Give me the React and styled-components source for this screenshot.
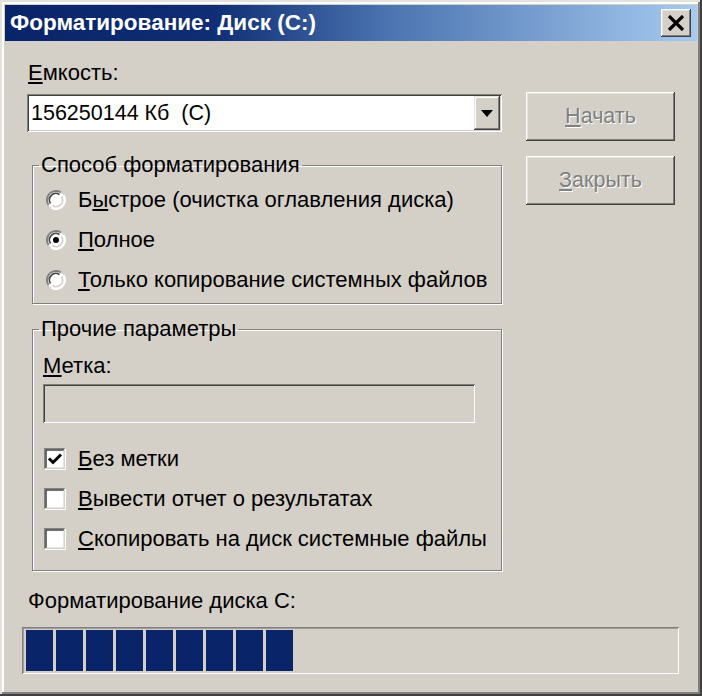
import React from "react";
import styled, { createGlobalStyle } from "styled-components";

const Global = createGlobalStyle`
  html, body { margin: 0; padding: 0; background: #d4d0c8; }
  body { font-family: "Liberation Sans", Arial, sans-serif; }
  * { box-sizing: border-box; }
`;

const Window = styled.div`
  width: 702px;
  height: 696px;
  background: #d4d0c8;
  padding: 5px;
  display: flex;
  flex-direction: column;
  box-shadow: inset -2px -2px #404040, inset 2px 2px #e4e2dc,
    inset -4px -4px #808080, inset 4px 4px #ffffff;
  font-size: 22px;
  color: #000;
`;

const TitleBar = styled.div`
  height: 36px;
  flex: none;
  display: flex;
  align-items: center;
  justify-content: space-between;
  padding: 0 6px 0 5px;
  background: linear-gradient(90deg, #0a246a 0%, #0f2d75 30%, #4a73b0 55%, #a6caf0 100%);
`;

const Title = styled.span`
  color: #fff;
  font-weight: bold;
  font-size: 22.5px;
`;

const CloseButton = styled.div`
  width: 30px;
  height: 28px;
  background: #d4d0c8;
  display: flex;
  align-items: center;
  justify-content: center;
  box-shadow: inset -1px -1px #404040, inset 1px 1px #fff,
    inset -2px -2px #808080, inset 2px 2px #e4e2dc;
`;

const Body = styled.div`
  padding: 20px 22px 0 22px;
  display: grid;
  grid-template-columns: 475px 149px;
  column-gap: 24px;
`;

const LeftCol = styled.div`
  display: flex;
  flex-direction: column;
`;

const RightCol = styled.div`
  display: flex;
  flex-direction: column;
  gap: 15px;
  padding-top: 31px;
`;

const Label = styled.div`
  height: 24px;
  line-height: 24px;
  padding-left: ${(p) => p.$indent || 0}px;
  margin-top: ${(p) => p.$mt || 0}px;
`;

const Key = styled.span`
  text-decoration: underline;
  text-underline-offset: 2px;
`;

const Sunken = styled.div`
  background: ${(p) => p.$bg || "#fff"};
  box-shadow: inset 1px 1px #808080, inset -1px -1px #fff,
    inset 2px 2px #404040, inset -2px -2px #d4d0c8;
`;

const Combo = styled(Sunken)`
  margin-top: 9px;
  height: 38px;
  display: flex;
  align-items: center;
  padding: 2px 2px 2px 4px;
`;

const ComboText = styled.span`
  flex: 1;
  white-space: pre;
  font-size: 21.5px;
`;

const DropButton = styled.div`
  width: 26px;
  height: 34px;
  background: #d4d0c8;
  display: flex;
  align-items: center;
  justify-content: center;
  box-shadow: inset -1px -1px #404040, inset 1px 1px #e4e2dc,
    inset -2px -2px #808080, inset 2px 2px #fff;
`;

const Group = styled.fieldset`
  margin: ${(p) => p.$mt}px 0 0 5px;
  padding: 0;
  width: 470px;
  min-width: 0;
  border: 1px solid #808080;
  box-shadow: inset 1px 1px #fff, 1px 1px #fff;
`;

const Legend = styled.legend`
  margin-left: 6px;
  padding: 0 2px;
  line-height: 24px;
  height: 24px;
`;

const GroupContent = styled.div`
  display: flex;
  flex-direction: column;
  padding: ${(p) => p.$pad};
`;

const OptionRow = styled.div`
  height: 40px;
  display: flex;
  align-items: center;
  gap: 12px;
  white-space: nowrap;
`;

const Field = styled(Sunken)`
  margin-top: 6px;
  height: 39px;
  width: 432px;
`;

const Checks = styled.div`
  margin-top: 16px;
  display: flex;
  flex-direction: column;
  margin-left: 1px;
`;

const Button = styled.div`
  height: 49px;
  background: #d4d0c8;
  display: flex;
  align-items: center;
  justify-content: center;
  color: #808080;
  text-shadow: 1px 1px #fff;
  font-size: 21.5px;
  box-shadow: inset -1px -1px #404040, inset 1px 1px #fff,
    inset -2px -2px #808080, inset 2px 2px #e4e2dc;
`;

const Bottom = styled.div`
  display: flex;
  flex-direction: column;
  padding-left: 17px;
`;

const Progress = styled.div`
  margin-top: 14px;
  width: 657px;
  height: 47px;
  padding: 3px 3px 3px 4px;
  display: flex;
  gap: 3px;
  background: #d4d0c8;
  box-shadow: inset 1px 1px #808080, inset -1px -1px #fff,
    inset 2px 2px #a09c94;
`;

const Block = styled.div`
  width: 27px;
  height: 100%;
  background: #0a246a;
`;

const Radio = ({ checked }) => (
  <svg width="20" height="20" viewBox="0 0 20 20">
    <circle cx="10" cy="10" r="9" fill="#fff" />
    <path d="M2.5 15 A9 9 0 0 1 15 2.5" stroke="#808080" strokeWidth="2" fill="none" />
    <path d="M4.5 13.5 A6.5 6.5 0 0 1 13.5 4.5" stroke="#404040" strokeWidth="1.6" fill="none" />
    <path d="M17.5 5 A9 9 0 0 1 5 17.5" stroke="#fff" strokeWidth="2" fill="none" />
    <path d="M15.5 6.5 A6.5 6.5 0 0 1 6.5 15.5" stroke="#d4d0c8" strokeWidth="1.6" fill="none" />
    {checked && <circle cx="10" cy="10" r="3" fill="#000" />}
  </svg>
);

const CheckBox = ({ checked }) => (
  <svg width="22" height="22" viewBox="0 0 22 22">
    <rect x="0" y="0" width="22" height="22" fill="#fff" />
    <path d="M0.5 21.5 V0.5 H21.5" stroke="#808080" strokeWidth="1.5" fill="none" />
    <path d="M2 20 V2 H20" stroke="#404040" strokeWidth="1.5" fill="none" />
    <path d="M21.5 0.5 V21.5 H0.5" stroke="#fff" strokeWidth="1.5" fill="none" />
    <path d="M20.2 2 V20.2 H2" stroke="#d4d0c8" strokeWidth="1.5" fill="none" />
    {checked && (
      <path d="M5 10.5 L9 14.5 L17 6.5" stroke="#000" strokeWidth="3" fill="none" />
    )}
  </svg>
);

export default function App() {
  return (
    <>
      <Global />
      <Window>
        <TitleBar>
          <Title>Форматирование: Диск (С:)</Title>
          <CloseButton>
            <svg width="18" height="16" viewBox="0 0 18 16">
              <path d="M2 1 L16 15 M16 1 L2 15" stroke="#000" strokeWidth="3.2" />
            </svg>
          </CloseButton>
        </TitleBar>
        <Body>
          <LeftCol>
            <Label $indent={1}>
              <Key>Е</Key>мкость:
            </Label>
            <Combo>
              <ComboText>156250144 Кб  (С)</ComboText>
              <DropButton>
                <svg width="12" height="7" viewBox="0 0 12 7">
                  <path d="M0 0 H12 L6 7 Z" fill="#000" />
                </svg>
              </DropButton>
            </Combo>
            <Group $mt={21}>
              <Legend>Способ форматирования</Legend>
              <GroupContent $pad="3px 0 3px 13px">
                <OptionRow>
                  <Radio />
                  <span>
                    Б<Key>ы</Key>строе (очистка оглавления диска)
                  </span>
                </OptionRow>
                <OptionRow>
                  <Radio checked />
                  <span>
                    <Key>П</Key>олное
                  </span>
                </OptionRow>
                <OptionRow>
                  <Radio />
                  <span>
                    <Key>Т</Key>олько копирование системных файлов
                  </span>
                </OptionRow>
              </GroupContent>
            </Group>
            <Group $mt={13}>
              <Legend>Прочие параметры</Legend>
              <GroupContent $pad="13px 0 11px 10px">
                <Label>
                  <Key>М</Key>етка:
                </Label>
                <Field $bg="#d4d0c8" />
                <Checks>
                  <OptionRow>
                    <CheckBox checked />
                    <span>
                      <Key>Б</Key>ез метки
                    </span>
                  </OptionRow>
                  <OptionRow>
                    <CheckBox />
                    <span>
                      <Key>В</Key>ывести отчет о результатах
                    </span>
                  </OptionRow>
                  <OptionRow>
                    <CheckBox />
                    <span>
                      <Key>С</Key>копировать на диск системные файлы
                    </span>
                  </OptionRow>
                </Checks>
              </GroupContent>
            </Group>
          </LeftCol>
          <RightCol>
            <Button>
              <span>
                <Key>Н</Key>ачать
              </span>
            </Button>
            <Button>
              <span>
                <Key>З</Key>акрыть
              </span>
            </Button>
          </RightCol>
        </Body>
        <Bottom>
          <Label $mt={18} $indent={6}>
            Форматирование диска С:
          </Label>
          <Progress>
            {Array.from({ length: 9 }).map((_, i) => (
              <Block key={i} />
            ))}
          </Progress>
        </Bottom>
      </Window>
    </>
  );
}
